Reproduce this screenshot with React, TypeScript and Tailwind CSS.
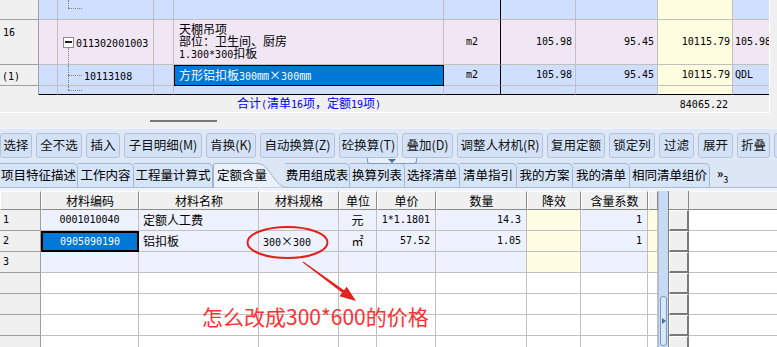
import React from "react";

const MONO = "font-['DejaVu_Sans_Mono','Liberation_Mono',monospace] text-[10px]";

function M({ children }: { children: React.ReactNode }) {
  return <span className={MONO}>{children}</span>;
}

function X() {
  return <span className="inline-block w-[12px] text-center">×</span>;
}

type TopRowProps = {
  h: string;
  bg: string;
  rn?: React.ReactNode;
  tree?: React.ReactNode;
  name?: React.ReactNode;
  sel?: boolean;
  unit?: string;
  v1?: string;
  v2?: string;
  v3?: string;
  last?: string;
  end?: boolean;
};

function TopRow(p: TopRowProps) {
  const bb = p.end ? "border-b-black" : "border-b-[#c0c0c0]";
  const cell = `shrink-0 h-full border-r border-b border-r-[#c0c0c0] ${bb} overflow-hidden whitespace-nowrap flex items-center`;
  const cell5 = `shrink-0 h-full border-r border-b border-r-black ${bb} overflow-hidden whitespace-nowrap flex items-center justify-center`;
  const rnc = p.end
    ? "shrink-0 h-full w-[39px] bg-[#f0f0f0] border-r border-r-[#a0a0a0]"
    : "shrink-0 h-full w-[39px] bg-[#f0f0f0] border-r border-b border-r-[#a0a0a0] border-b-[#a0a0a0]";
  return (
    <div className={`flex ${p.h}`}>
      <div className={rnc}>{p.rn}</div>
      <div className={`${cell} w-[19px] ${p.bg}`} />
      <div className={`${cell} w-[96px] ${p.bg} relative`}>{p.tree}</div>
      <div className={`${cell} w-[20px] ${p.bg}`} />
      {p.sel ? (
        <div className="shrink-0 h-full w-[270px] border border-black bg-[#0078d7] text-white pl-[4px] flex items-center whitespace-nowrap overflow-hidden">
          {p.name}
        </div>
      ) : (
        <div className={`${cell} w-[270px] ${p.bg} pl-[5px]`}>{p.name}</div>
      )}
      <div className={`${cell5} w-[57px] ${p.bg}`}>{p.unit && <M>{p.unit}</M>}</div>
      <div className={`${cell} w-[75px] ${p.bg} justify-end pr-[3px]`}>{p.v1 && <M>{p.v1}</M>}</div>
      <div className={`${cell} w-[82px] ${p.bg} justify-end pr-[3px]`}>{p.v2 && <M>{p.v2}</M>}</div>
      <div className={`${cell} w-[75px] bg-[#fffde0] justify-end pr-[2px]`}>{p.v3 && <M>{p.v3}</M>}</div>
      <div className={`shrink-0 h-full w-[36px] border-b ${bb} ${p.bg} overflow-hidden whitespace-nowrap flex items-center pl-[2px]`}>
        {p.last && <M>{p.last}</M>}
      </div>
    </div>
  );
}

const DV = "absolute border-l border-dotted border-[#808080]";
const DH = "absolute border-t border-dotted border-[#808080]";

function TopGrid() {
  return (
    <div className="flex h-[95px]">
      <div className="flex w-[769px] flex-col">
        <TopRow
          h="h-[20px]"
          bg="bg-[#d0dfff]"
          tree={
            <>
              <div className={`${DV} left-[10px] top-0 h-[8px]`} />
              <div className={`${DH} left-[10px] top-[8px] w-[14px]`} />
            </>
          }
        />
        <TopRow
          h="h-[45px]"
          bg="bg-[#f1e6f4]"
          rn={
            <div className="pt-[5px] pl-[3px]">
              <M>16</M>
            </div>
          }
          tree={
            <>
              <div className={`${DV} left-[10px] top-[28px] bottom-0`} />
              <div className="flex items-center h-full">
                <div className="ml-[5px] w-[11px] h-[11px] border border-[#8c8c8c] bg-white flex items-center justify-center">
                  <div className="w-[7px] h-[1.5px] bg-[#202020]" />
                </div>
                <div className="ml-[2px]">
                  <M>011302001003</M>
                </div>
              </div>
            </>
          }
          name={
            <div className="flex flex-col leading-[12px]">
              <span>天棚吊项</span>
              <span>部位：卫生间、厨房</span>
              <span>
                <M>1.300*300</M>扣板
              </span>
            </div>
          }
          unit="m2"
          v1="105.98"
          v2="95.45"
          v3="10115.79"
          last="105.98"
        />
        <TopRow
          h="h-[21px]"
          bg="bg-[#d0dfff]"
          rn={
            <div className="pt-[4px] pl-[2px]">
              <M>(1)</M>
            </div>
          }
          tree={
            <>
              <div className={`${DV} left-[10px] top-0 bottom-0`} />
              <div className={`${DH} left-[10px] top-[10px] w-[14px]`} />
              <div className="pl-[26px]">
                <M>10113108</M>
              </div>
            </>
          }
          sel
          name={
            <span>
              方形铝扣板<M>300</M>㎜<X />
              <M>300</M>㎜
            </span>
          }
          unit="m2"
          v1="105.98"
          v2="95.45"
          v3="10115.79"
          last="QDL"
        />
        <TopRow
          h="h-[9px]"
          bg="bg-[#d0dfff]"
          end
          tree={
            <>
              <div className={`${DV} left-[10px] top-0 h-[4px]`} />
              <div className={`${DH} left-[10px] top-[4px] w-[14px]`} />
            </>
          }
        />
      </div>
      <div className="w-[8px] border-l border-white" />
    </div>
  );
}

function Footer() {
  return (
    <div className="flex h-[18px] w-[770px] items-center border-r border-b border-white">
      <div className="w-[174px] shrink-0" />
      <div className="w-[270px] shrink-0 text-center text-[#0000ff] whitespace-nowrap">
        合计<M>(</M>清单<M>16</M>项，定额<M>19</M>项<M>)</M>
      </div>
      <div className="w-[214px] shrink-0" />
      <div className="w-[75px] shrink-0 text-right pr-[5px]">
        <M>84065.22</M>
      </div>
    </div>
  );
}

function Grip() {
  return (
    <div className="h-[15px] pt-[7px]">
      <div className="ml-[150px] w-[67px] h-[2px] bg-[#7a7a7a]" />
    </div>
  );
}

const BUTTONS: [string, string][] = [
  ["选择", "w-[32px]"],
  ["全不选", "w-[46px]"],
  ["插入", "w-[34px]"],
  ["子目明细(M)", "w-[78px]"],
  ["肯换(K)", "w-[50px]"],
  ["自动换算(Z)", "w-[75px]"],
  ["砼换算(T)", "w-[59px]"],
  ["叠加(D)", "w-[51px]"],
  ["调整人材机(R)", "w-[86px]"],
  ["复用定额", "w-[58px]"],
  ["锁定列", "w-[46px]"],
  ["过滤", "w-[35px]"],
  ["展开", "w-[35px]"],
  ["折叠", "w-[33px]"],
  ["", "w-[30px]"],
];

function Toolbar() {
  return (
    <div className="flex gap-[4px] h-[32px] pt-[4px] bg-[#dee8f6] border-t border-[#eef3fa] overflow-hidden">
      {BUTTONS.map(([t, w], i) => (
        <div
          key={i}
          className={`${w} shrink-0 h-[25px] rounded-[3px] border border-[#b3c2d8] bg-[#d3e2f7] flex items-center justify-center text-[12.5px] whitespace-nowrap text-[#111]`}
        >
          {t}
        </div>
      ))}
    </div>
  );
}

const TABS: [string, string][] = [
  ["项目特征描述", "w-[78px]"],
  ["工作内容", "w-[56px]"],
  ["工程量计算式", "w-[79px]"],
  ["定额含量", "w-[72px]"],
  ["费用组成表", "w-[65px]"],
  ["换算列表", "w-[55px]"],
  ["选择清单", "w-[55px]"],
  ["清单指引", "w-[57px]"],
  ["我的方案", "w-[56px]"],
  ["我的清单", "w-[57px]"],
  ["相同清单组价", "w-[80px]"],
];

function Tabs() {
  return (
    <div className="relative flex items-end h-[27px] bg-[#dce6f5]">
      {TABS.map(([t, w], i) =>
        i === 3 ? (
          <div key={i} className={`${w} shrink-0 h-[24px] relative z-10`}>
            <svg className="absolute left-0 top-0" width="76" height="25" viewBox="0 0 76 25">
              <path d="M0.5,25 L0.5,2 Q0.5,0.5 2,0.5 L44,0.5 C58,0.5 60,24.5 75,24.5 L75,25 Z" fill="#eaf1fb" stroke="#9fb3cc" strokeWidth="1" />
            </svg>
            <div className="relative h-full flex items-center pl-[4px] text-[12.5px] whitespace-nowrap">{t}</div>
          </div>
        ) : (
          <div
            key={i}
            className={`${w} shrink-0 h-[24px] flex items-center justify-center border-t border-r border-[#a5b7d0] rounded-tr-[5px] bg-[#d6e4f7] text-[12.5px] whitespace-nowrap`}
          >
            {t}
          </div>
        )
      )}
      <div className="ml-[7px] h-[24px] flex items-start pt-[4px] whitespace-nowrap">
        <span className="text-[12px] font-bold leading-none">»</span>
        <span className="text-[9px] leading-none mt-[8px]">3</span>
      </div>
      <div className="absolute left-[367px] top-[-2px] w-[50px] h-[6px] border border-t-0 border-[#7f9cc5] rounded-b-[3px] bg-[#e8f0fb] flex justify-center">
        <div className="w-0 h-0 border-x-[4px] border-x-transparent border-t-[4px] border-t-[#4f6f98] mt-[1px]" />
      </div>
    </div>
  );
}

type BC = { t?: React.ReactNode; a?: "l" | "c" | "r"; bg?: string; sel?: boolean };

const BW = ["w-[41px]", "w-[98px]", "w-[120px]", "w-[80px]", "w-[38px]", "w-[59px]", "w-[91px]", "w-[54px]", "w-[67px]", "w-[10px]"];
const HEAD = ["", "材料编码", "材料名称", "材料规格", "单位", "单价", "数量", "降效", "含量系数", ""];
const AL = { l: "justify-start pl-[4px]", c: "justify-center", r: "justify-end pr-[5px]" };

function BRow({ rn, cells, bg }: { rn: string; cells: BC[]; bg: string }) {
  return (
    <div className="flex h-[21px] shrink-0">
      <div className="w-[41px] shrink-0 h-full bg-[#f0f0f0] border-r border-b border-[#a0a0a0] pl-[3px] flex items-center">
        {rn && <M>{rn}</M>}
      </div>
      {cells.map((c, i) =>
        c.sel ? (
          <div
            key={i}
            className={`${BW[i + 1]} shrink-0 h-full border-2 border-black bg-[#0078d7] text-white flex items-center justify-center whitespace-nowrap overflow-hidden`}
          >
            {c.t}
          </div>
        ) : (
          <div
            key={i}
            className={`${BW[i + 1]} shrink-0 h-full border-r border-b border-[#c0c0c0] flex items-center whitespace-nowrap overflow-hidden ${AL[c.a || "l"]} ${c.bg || bg}`}
          >
            {c.t}
          </div>
        )
      )}
    </div>
  );
}

function Bottom() {
  const Y = "bg-[#fffde3]";
  const LAV = "bg-[#eef2fe]";
  const W = "bg-white";
  const empty = (bg: string): BC[] => [{}, {}, {}, {}, {}, {}, { bg: bg === LAV ? Y : W }, {}, { bg: bg === LAV ? Y : W }];
  return (
    <div className="flex h-[156px] overflow-hidden">
      <div className="w-[658px] shrink-0 flex flex-col">
        <div className="flex h-[19px] shrink-0">
          {HEAD.map((h, i) => (
            <div
              key={i}
              className={`${BW[i]} shrink-0 h-full bg-[#f0f0f0] border-l border-t border-l-white border-t-white border-r border-b border-r-[#8a8a8a] border-b-[#8a8a8a] flex items-center justify-center whitespace-nowrap`}
            >
              {h}
            </div>
          ))}
        </div>
        <BRow
          rn="1"
          bg={LAV}
          cells={[
            { t: <M>0001010040</M>, a: "c" },
            { t: "定额人工费", a: "l" },
            {},
            { t: "元", a: "c" },
            { t: <M>1*1.1801</M>, a: "r" },
            { t: <M>14.3</M>, a: "r" },
            { bg: Y },
            { t: <M>1</M>, a: "r" },
            { bg: Y },
          ]}
        />
        <BRow
          rn="2"
          bg={LAV}
          cells={[
            { t: <M>0905090190</M>, sel: true },
            { t: "铝扣板", a: "l" },
            {
              t: (
                <span>
                  <M>300</M>
                  <X />
                  <M>300</M>
                </span>
              ),
              a: "l",
            },
            { t: "㎡", a: "c" },
            { t: <M>57.52</M>, a: "r" },
            { t: <M>1.05</M>, a: "r" },
            { bg: Y },
            { t: <M>1</M>, a: "r" },
            { bg: Y },
          ]}
        />
        <BRow rn="3" bg={LAV} cells={empty(LAV)} />
        <BRow rn="" bg={W} cells={empty(W)} />
        <BRow rn="" bg={W} cells={empty(W)} />
        <BRow rn="" bg={W} cells={empty(W)} />
        <BRow rn="" bg={W} cells={empty(W)} />
      </div>
      <div className="w-[10px] shrink-0 bg-[#c8daf4] border-l border-[#a8bedc] flex flex-col">
        <div className="mt-[105px] ml-[1px] w-[7px] h-[50px] border border-[#7b9ac4] rounded-[3px] bg-[#d9e7f9] flex items-center justify-center">
          <div className="w-0 h-0 border-y-[3px] border-y-transparent border-l-[4px] border-l-[#4a6d99]" />
        </div>
      </div>
      <div className="w-[109px] shrink-0 flex flex-col border-l border-[#808080] bg-white">
        <div className="flex h-[19px] shrink-0">
          <div className="w-[20px] shrink-0 h-full bg-[#f0f0f0] border-r border-b border-[#8a8a8a]" />
          <div className="flex-1 h-full bg-[#f0f0f0] border-b border-[#8a8a8a] border-t border-t-white" />
        </div>
        {[0, 1, 2, 3, 4, 5, 6].map((i) => (
          <div key={i} className="flex h-[21px] shrink-0">
            <div className="w-[20px] shrink-0 h-full bg-[#f0f0f0] border-t border-l border-t-white border-l-white border-r-2 border-b-2 border-r-[#7a7a7a] border-b-[#7a7a7a]" />
            <div className="flex-1 h-full border-b border-[#c0c0c0]" />
          </div>
        ))}
      </div>
    </div>
  );
}

function Annotations() {
  return (
    <>
      <svg className="absolute left-0 top-0 pointer-events-none" width="777" height="347" viewBox="0 0 777 347">
        <ellipse cx="287.5" cy="242.5" rx="40" ry="15.5" fill="none" stroke="#e3211d" strokeWidth="2" />
        <polygon
          points="303.3,261.6 344,290.3 346.7,286.7 356,301 339.5,296.3 342.2,292.7 302.7,262.4"
          fill="#e3211d"
        />
      </svg>
      <div className="absolute left-[202px] top-[306px] text-[21px] leading-none text-[#ff3030] whitespace-nowrap">
        怎么改成300*600的价格
      </div>
    </>
  );
}

export default function App() {
  return (
    <div className="relative w-[777px] h-[347px] overflow-hidden bg-[#f0f0f0] text-[12px] text-black leading-none font-['Noto_Sans_CJK_SC','Noto_Sans',sans-serif]">
      <TopGrid />
      <Footer />
      <Grip />
      <Toolbar />
      <Tabs />
      <div className="h-[1px] bg-[#a9bbd3]" />
      <div className="h-[3px] bg-[#eef3fb]" />
      <Bottom />
      <Annotations />
    </div>
  );
}
